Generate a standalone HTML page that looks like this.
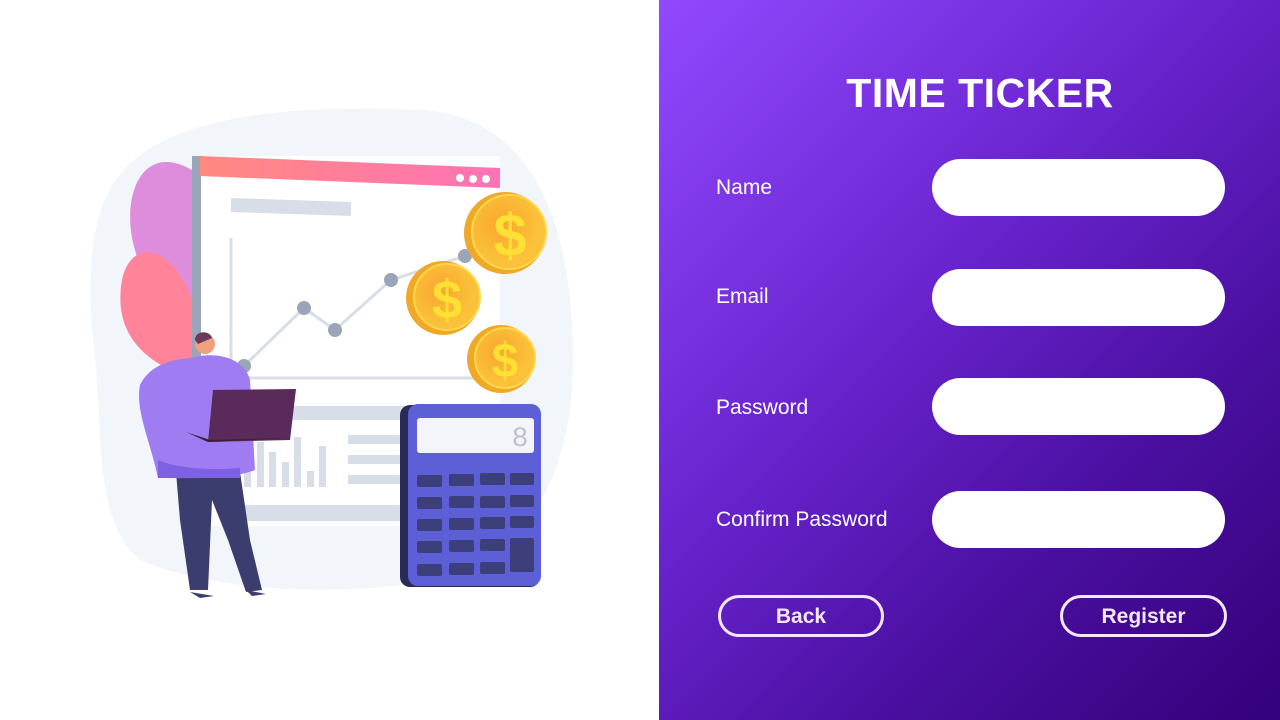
<!DOCTYPE html>
<html><head><meta charset="utf-8"><style>
html,body{margin:0;padding:0;width:1280px;height:720px;overflow:hidden;background:#fff;font-family:"Liberation Sans",sans-serif}
#r{position:absolute;left:659px;top:0;width:621px;height:720px;background:linear-gradient(135deg,#9249ff 0%,#6a25d0 40%,#4a0fa0 70%,#33007a 100%)}
h1{position:absolute;left:0;width:642px;top:70px;margin:0;text-align:center;color:#fff;font-size:41px;font-weight:900;letter-spacing:0.5px}
.l{position:absolute;left:57px;color:#fff;font-size:21px}
.i{position:absolute;left:273px;width:293px;height:57px;border-radius:29px;background:#fff}
.b{position:absolute;top:595px;height:36px;border:3px solid #f3e6ff;border-radius:22px;color:#f3e6ff;font-size:21px;font-weight:bold;text-align:center;line-height:38px;box-sizing:content-box}
</style></head><body>
<svg width="659" height="720" style="position:absolute;left:0;top:0">
<defs>
<linearGradient id="bar" x1="0" x2="1"><stop offset="0" stop-color="#ff8a80"/><stop offset="1" stop-color="#ff72b6"/></linearGradient>
<radialGradient id="coin" cx=".4" cy=".4"><stop offset="0" stop-color="#f9a630"/><stop offset="1" stop-color="#fbc13a"/></radialGradient>
</defs>
<path d="M105 200 C140 110 300 105 420 110 C520 115 560 200 570 300 C582 420 560 520 470 570 C380 600 220 595 140 560 C90 520 105 420 92 330 C88 270 92 230 105 200Z" fill="#f2f5f9"/>
<path d="M192 170 C140 140 120 200 135 250 C145 290 170 310 192 330Z" fill="#de8cdc"/>
<path d="M192 300 C170 240 130 240 122 280 C115 320 130 350 170 370 L192 370Z" fill="#ff8399"/>
<rect x="192" y="156" width="308" height="370" fill="#fff"/>
<rect x="192" y="156" width="9" height="370" fill="#9aa5b8"/>
<path d="M200 156 L500 168 L500 188 L200 176Z" fill="url(#bar)"/>
<circle cx="460" cy="178" r="4" fill="#fff"/><circle cx="473" cy="179" r="4" fill="#fff"/><circle cx="486" cy="179" r="4" fill="#fff"/>
<path d="M231 198 L351 202 L351 216 L231 212Z" fill="#d8dee8"/>
<line x1="231" y1="238" x2="231" y2="378" stroke="#d8dee8" stroke-width="3"/>
<line x1="231" y1="378" x2="480" y2="378" stroke="#d8dee8" stroke-width="3"/>
<polyline points="244,366 304,308 335,330 391,280 465,256" fill="none" stroke="#d8dee8" stroke-width="3"/>
<g fill="#9aa5b8"><circle cx="244" cy="366" r="7"/><circle cx="304" cy="308" r="7"/><circle cx="335" cy="330" r="7"/><circle cx="391" cy="280" r="7"/><circle cx="465" cy="256" r="7"/></g>
<rect x="225" y="406" width="195" height="14" fill="#d8dee8"/>
<rect x="225" y="505" width="195" height="16" fill="#d8dee8"/>
<g fill="#d8dee8"><rect x="244" y="452" width="7" height="35"/><rect x="257" y="442" width="7" height="45"/><rect x="269" y="452" width="7" height="35"/><rect x="282" y="462" width="7" height="25"/><rect x="294" y="437" width="7" height="50"/><rect x="307" y="471" width="7" height="16"/><rect x="319" y="446" width="7" height="41"/>
<rect x="348" y="435" width="60" height="9"/><rect x="348" y="455" width="60" height="9"/><rect x="348" y="475" width="60" height="9"/></g>
<g><circle cx="505" cy="233" r="41" fill="#f0a828"/><circle cx="509" cy="232" r="37" fill="url(#coin)" stroke="#ffd84a" stroke-width="2"/><text x="510" y="256" font-size="60" font-weight="bold" fill="#ffe033" text-anchor="middle">$</text></g>
<g><circle cx="443" cy="298" r="37" fill="#f0a828"/><circle cx="447" cy="297" r="33" fill="url(#coin)" stroke="#ffd84a" stroke-width="2"/><text x="447" y="318" font-size="54" font-weight="bold" fill="#ffe033" text-anchor="middle">$</text></g>
<g><circle cx="501" cy="359" r="34" fill="#f0a828"/><circle cx="505" cy="358" r="30" fill="url(#coin)" stroke="#ffd84a" stroke-width="2"/><text x="505" y="377" font-size="48" font-weight="bold" fill="#ffe033" text-anchor="middle">$</text></g>
<rect x="400" y="405" width="140" height="182" rx="10" fill="#282a57"/>
<rect x="408" y="404" width="133" height="182" rx="10" fill="#5c5fd6"/>
<rect x="417" y="418" width="117" height="35" rx="3" fill="#f3f5fa"/>
<text x="520" y="446" font-size="28" fill="#c0c0cc" text-anchor="middle" font-family="Liberation Mono">8</text>
<g fill="#3c3f7a">
<rect x="417" y="475" width="25" height="12" rx="2"/><rect x="449" y="474" width="25" height="12" rx="2"/><rect x="480" y="473" width="25" height="12" rx="2"/><rect x="510" y="473" width="24" height="12" rx="2"/>
<rect x="417" y="497" width="25" height="12" rx="2"/><rect x="449" y="496" width="25" height="12" rx="2"/><rect x="480" y="496" width="25" height="12" rx="2"/><rect x="510" y="495" width="24" height="12" rx="2"/>
<rect x="417" y="519" width="25" height="12" rx="2"/><rect x="449" y="518" width="25" height="12" rx="2"/><rect x="480" y="517" width="25" height="12" rx="2"/><rect x="510" y="516" width="24" height="12" rx="2"/>
<rect x="417" y="541" width="25" height="12" rx="2"/><rect x="449" y="540" width="25" height="12" rx="2"/><rect x="480" y="539" width="25" height="12" rx="2"/><rect x="510" y="538" width="24" height="34" rx="2"/>
<rect x="417" y="564" width="25" height="12" rx="2"/><rect x="449" y="563" width="25" height="12" rx="2"/><rect x="480" y="562" width="25" height="12" rx="2"/>
</g>
<path d="M176 472 L240 472 L250 540 L262 590 L246 592 L228 540 L212 500 L208 590 L190 590 L180 520Z" fill="#3b3d6e"/>
<path d="M190 592 L214 596 L200 598Z M246 590 L266 594 L252 596Z" fill="#3b3d6e"/>
<path d="M190 358 C220 350 245 360 250 380 L255 470 C230 480 190 478 158 478 C150 440 135 410 140 385 C150 365 170 360 190 358Z" fill="#a07cf3"/>
<path d="M158 460 C180 470 220 470 240 468 L240 478 L158 478Z" fill="#7e60e3"/>
<circle cx="205" cy="344" r="10" fill="#f0a080"/>
<path d="M195 340 C195 330 210 330 212 338 L198 344Z" fill="#6a3a5a"/>
<path d="M213 390 L296 389 L290 440 L208 442Z" fill="#5a2a5a"/>
<path d="M186 432 L210 440 L290 438 L208 442Z" fill="#3b1d3b"/>
</svg>
<div id="r">
<h1>TIME TICKER</h1>
<div class="l" style="top:176px">Name</div>
<div class="l" style="top:285px">Email</div>
<div class="l" style="top:396px">Password</div>
<div class="l" style="top:508px">Confirm Password</div>
<div class="i" style="top:159px"></div>
<div class="i" style="top:269px"></div>
<div class="i" style="top:378px"></div>
<div class="i" style="top:491px"></div>
<div class="b" style="left:59px;width:160px">Back</div>
<div class="b" style="left:401px;width:161px">Register</div>
</div>
</body></html>
